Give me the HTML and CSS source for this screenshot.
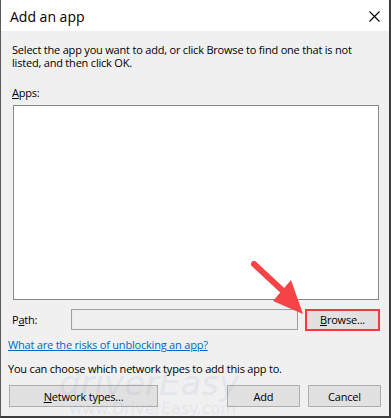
FILE: index.html
```html
<!DOCTYPE html>
<html>
<head>
<meta charset="utf-8">
<link rel="stylesheet" href="styles.css">
</head>
<body>
<div class="window">
  <div class="titlebar">
    <span class="title">Add an app</span>
    <svg class="close" width="11" height="11" viewBox="0 0 11 11"><path d="M0.5 0.5 L10.5 10.5 M10.5 0.5 L0.5 10.5" stroke="#000" stroke-width="1.1" fill="none"/></svg>
  </div>
  <div class="body">
    <div class="section">
      <p class="intro">Select the app you want to add, or click Browse to find one that is not listed, and then click OK.</p>
      <div class="label apps"><span class="u">A</span>pps:</div>
      <div class="listbox"></div>
      <div class="pathrow">
        <span class="label">P<span class="u">a</span>th:</span>
        <div class="field"></div>
        <div class="browse"><span><span class="u">B</span>rowse...</span></div>
      </div>
    </div>
    <a class="link">What are the risks of unblocking an app?</a>
    <p class="note">You can choose which network types to add this app to.</p>
    <div class="buttons">
      <div class="btn net"><span class="u">N</span>etwork types...</div>
      <div class="spacer"></div>
      <div class="btn ok">Add</div>
      <div class="btn cancel">Cancel</div>
    </div>
  </div>
  <div class="watermark">
    <div class="wm-logo">driverEasy</div>
    <div class="wm-url">www.DriverEasy.com</div>
  </div>
  <svg class="arrow" width="70" height="60" viewBox="0 0 70 60">
    <line x1="3" y1="3" x2="32" y2="30" stroke="#f44447" stroke-width="6" stroke-linecap="round"/>
    <polygon points="22,40 40,19 52,53" fill="#f44447"/>
  </svg>
</div>
</body>
</html>
```
FILE: styles.css
```css
* { box-sizing: border-box; }
html, body { margin: 0; padding: 0; background: #f0f0f0; }
body { font-family: "Open Sans", "Noto Sans", sans-serif; font-size: 11px; color: #000; letter-spacing: -0.2px; }
.window {
  position: relative;
  width: 391px;
  height: 418px;
  background: #f0f0f0;
  border-left: 1px solid #5a5a5a;
  border-right: 2px solid #3c3c3c;
  border-bottom: 2px solid #3c3c3c;
  overflow: hidden;
}
.titlebar {
  height: 31px;
  background: #fff;
  display: flex;
  align-items: center;
  justify-content: space-between;
  padding: 0 9px 0 9px;
}
.title { font-size: 14px; line-height: 16px; margin-top: 3px; letter-spacing: 0; }
.close { margin-top: 1px; }
.body { padding: 0 0 0 7px; }
.section { padding-left: 4px; }
.intro { margin: 12px 0 0 0; line-height: 13px; width: 362px; }
.label { line-height: 13px; }
.apps { margin-top: 17px; }
.u { text-decoration: underline; text-underline-offset: 1px; }
.listbox {
  margin: 6px 0 0 1px;
  width: 366px;
  height: 195px;
  background: #fff;
  border: 1px solid #828790;
}
.pathrow {
  display: flex;
  align-items: center;
  margin-top: 9px;
  height: 21px;
}
.pathrow .label { width: 59px; }
.field {
  width: 227px;
  height: 21px;
  background: #f0f0f0;
  border: 1px solid #a0a0a0;
  box-shadow: inset 0 0 0 1px #ececec;
}
.browse {
  margin-left: 7px;
  width: 75px;
  height: 22px;
  border: 2px solid #f03c40;
  background: #e1e1e1;
  display: flex;
  align-items: center;
  justify-content: center;
}
.link {
  display: block;
  margin-top: 8px;
  color: #0066cc;
  text-decoration: underline;
  line-height: 14px;
}
.note { margin: 10px 0 0 0; line-height: 14px; }
.buttons {
  display: flex;
  margin-top: 9px;
  padding-left: 1px;
  height: 22px;
}
.btn {
  height: 22px;
  background: #e1e1e1;
  border: 1px solid #adadad;
  display: flex;
  align-items: center;
  justify-content: center;
}
.net { width: 149px; }
.spacer { flex: 1; }
.ok { width: 73px; }
.cancel { width: 73px; margin-left: 8px; margin-right: 8px; }
.watermark {
  position: absolute;
  left: 8px;
  top: 366px;
  color: #3a6ea8;
  opacity: 0.07;
  pointer-events: none;
  letter-spacing: 0;
}
.wm-logo { font-family: "DejaVu Sans", sans-serif; font-style: italic; font-size: 34px; line-height: 34px; padding-left: 50px; }
.wm-url { font-family: "DejaVu Sans", sans-serif; font-size: 16px; padding-left: 60px; line-height: 18px; }
.arrow { position: absolute; left: 250px; top: 261px; }
```
